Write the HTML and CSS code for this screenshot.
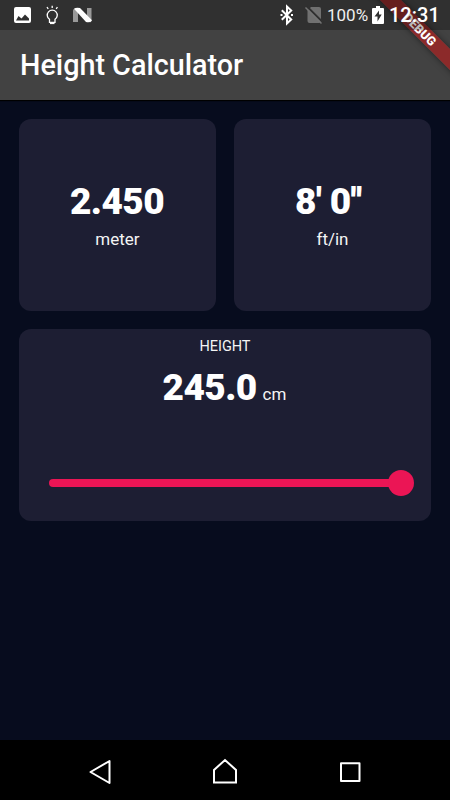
FILE: index.html
```html
<!DOCTYPE html>
<html lang="en">
<head>
<meta charset="utf-8">
<title>Height Calculator</title>
<link rel="stylesheet" href="styles.css">
</head>
<body>
<div class="phone">
  <header class="status">
    <svg class="status-left" width="100" height="30" viewBox="0 0 100 30">
      <path fill="#fff" fill-rule="evenodd" d="M16 7h13q2 0 2 2v12q0 2-2 2H16q-2 0-2-2V9q0-2 2-2zM16 20.500h13v-2l-4-4-3.500 4-3-2.500z"/>
      <g fill="none" stroke="#fff" stroke-width="1.300"><path d="M49.500 19.300a5 5 0 1 1 5.500 0v3h-5.500zM52.200 8V5.700M48.200 9l-1.200-2M56.200 9l1.200-2"/><path d="M50 23.200h4.500" stroke-width="1.800"/></g>
      <path fill="#999" d="M73 10.500q0-1.500 2-2l3 2V22h-5zM87 8h4.500v12.500q0 1.500-1.500 2l-3-2z"/>
      <path fill="#fff" d="M74 8.700q2-1.500 6-.7l12 12.300q-1 2.700-6 1.700z"/>
    </svg>
    <div class="status-right">
      <svg width="48" height="30" viewBox="0 0 48 30">
        <path d="M2.800 10.300l9.400 9.200-4.200 4V6.500l4.200 4-9.400 9.200" fill="none" stroke="#fff" stroke-width="2"/>
        <path d="M1.500 15h2M12 15h2" stroke="#fff" stroke-width="2"/>
        <path d="M32 7h8q2 0 2 2v12q0 2-2 2H30.500q-2 0-2-2V10.500z" fill="#707070"/>
        <path d="M28 6.500l16 16" stroke="#303030" stroke-width="2"/>
        <path d="M26.500 7.500l16 16" stroke="#747474" stroke-width="1.500"/>
      </svg>
      <span class="percent">100%</span>
      <svg class="battery" width="12" height="30" viewBox="0 0 12 30"><path fill="#fff" fill-rule="evenodd" d="M4 6h4v2h3q1 0 1 1v14q0 1-1 1H1q-1 0-1-1V9q0-1 1-1h3zM7 10.500l-4.500 6h3V21.500l4.200-7H7z"/></svg>
      <span class="time">12:31</span>
    </div>
  </header>
  <div class="appbar"><h1>Height Calculator</h1></div>
  <main>
    <section class="card"><div class="value">2.450</div><div class="unit">meter</div></section>
    <section class="card"><div class="value feet">8' 0<span class="inch">''</span></div><div class="unit">ft/in</div></section>
    <section class="card wide">
      <div class="label">HEIGHT</div>
      <div class="reading"><span class="value">245.0</span><span class="unit">cm</span></div>
      <div class="slider"><div class="track"></div><div class="thumb"></div></div>
    </section>
  </main>
  <nav>
    <svg width="450" height="60" viewBox="0 0 450 60" fill="none" stroke="#fff" stroke-width="2" stroke-linejoin="round"><path d="M90.500 32L109.500 21v22z"/><path d="M214 42.500V30l11-10 11 10v12.500z" stroke-linejoin="miter"/><path d="M341 23.200h18.500v17.800H341z"/></svg>
  </nav>
  <div class="banner">DEBUG</div>
</div>
</body>
</html>
```
FILE: styles.css
```css
* { box-sizing: border-box; }
body { margin: 0; }
.phone {
  position: relative;
  width: 450px;
  height: 800px;
  overflow: hidden;
  display: flex;
  flex-direction: column;
  background: linear-gradient(#424242 30px, #070c1e 30px);
  color: #fff;
  font-family: Roboto, "Liberation Sans", sans-serif;
}
.status {
  position: relative;
  z-index: 2;
  height: 30px;
  flex: none;
  display: flex;
  justify-content: space-between;
  background: rgba(0, 0, 0, .27);
}
.status-right { display: flex; width: 171px; line-height: 31px; }
.status-right svg { flex: none; }
.percent { width: 42px; font-size: 17px; color: #eee; }
.battery { margin-left: 3px; }
.time { margin-left: 5px; font-size: 20px; font-weight: 500; }
.appbar {
  height: 70px;
  flex: none;
  display: flex;
  align-items: center;
  padding-left: 20px;
  background: #424242;
  box-shadow: 0 1px 1px #000;
}
h1 { margin: 0; font-size: 28.75px; font-weight: 500; line-height: 34px; }
main {
  flex: 1;
  padding: 19px;
  display: grid;
  grid-template-columns: 1fr 1fr;
  grid-template-rows: 192px 192px;
  column-gap: 18px;
  row-gap: 18px;
}
.card {
  border-radius: 12px;
  background: #1d1e33;
  display: flex;
  flex-direction: column;
  align-items: center;
  justify-content: center;
  padding-bottom: 1px;
}
.value { font-size: 37px; font-weight: 900; line-height: 44px; letter-spacing: -.6px; margin: 0 0 0 -1px; }
.feet { padding-right: 7px; }
.inch { letter-spacing: 0; font-kerning: none; }
.unit { font-size: 17px; line-height: 20px; margin-top: 5px; color: #f4f4f4; }
.wide { grid-column: 1 / 3; justify-content: flex-start; padding-top: 9px; }
.label { font-size: 14.500px; line-height: 18px; letter-spacing: -.05px; color: #f4f4f4; }
.reading { display: flex; align-items: baseline; gap: 6px; margin-top: 10px; }
.slider {
  width: 365px;
  height: 26px;
  margin: 60px 0 0 12px;
  display: flex;
  align-items: center;
}
.track { flex: 1; height: 8px; border-radius: 4px 0 0 4px; background: #eb1555; }
.thumb { width: 26px; height: 26px; margin-left: -1px; border-radius: 50%; background: #eb1555; }
nav { height: 60px; flex: none; background: #000; }
nav svg { display: block; }
.banner {
  position: absolute;
  left: 359.500px;
  top: 22px;
  width: 120px;
  height: 15px;
  transform: rotate(45deg);
  background: rgba(183, 28, 28, .63);
  box-shadow: 0 0 6px rgba(0, 0, 0, .5);
  text-align: center;
  font-size: 12.500px;
  font-weight: 900;
  line-height: 15px;
}
```
